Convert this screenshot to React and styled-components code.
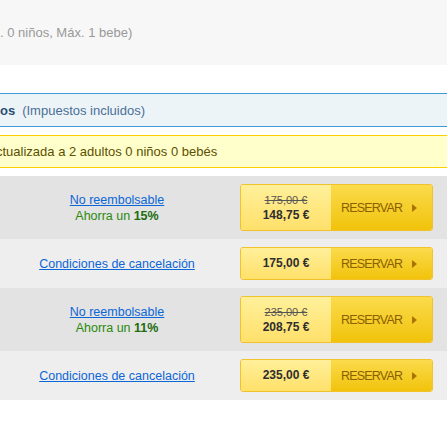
import styled, { createGlobalStyle } from "styled-components";

const Global = createGlobalStyle`
  html, body {
    margin: 0;
    padding: 0;
    background: #ffffff;
    overflow: hidden;
  }
  body {
    font-family: "Liberation Sans", Arial, sans-serif;
    font-size: 13px;
  }
`;

const RATES = [
  { id: 1, kind: "promo", oldPrice: "175,00 €", price: "148,75 €", saving: "15%" },
  { id: 2, kind: "std", price: "175,00 €" },
  { id: 3, kind: "promo", oldPrice: "235,00 €", price: "208,75 €", saving: "11%" },
  { id: 4, kind: "std", price: "235,00 €" },
];

const Page = styled.div`
  width: 447px;
`;

const Occupancy = styled.div`
  height: 65px;
  background: #f7f7f7;
  display: flex;
  align-items: center;
  color: #999999;
  white-space: nowrap;
`;

const TaxHeader = styled.div`
  margin-top: 28px;
  height: 32px;
  background: #edf4f8;
  border-top: 1px solid #3d9bd6;
  border-bottom: 1px solid #3d9bd6;
  display: flex;
  align-items: center;
  white-space: nowrap;
`;

const TaxTitle = styled.b`
  color: #2b4f73;
`;

const TaxNote = styled.span`
  margin-left: 7px;
  color: #4a6f97;
`;

const Notice = styled.div`
  margin-top: 8px;
  height: 31px;
  background: #ffffcc;
  border-top: 1px solid #fcd000;
  border-bottom: 1px solid #fcd000;
  display: flex;
  align-items: center;
  color: #5c5000;
  white-space: nowrap;
  text-indent: -4px;
`;

const Table = styled.div`
  margin-top: 8px;
  font-size: 12.5px;
`;

const Row = styled.div`
  display: grid;
  grid-template-columns: 234px 193px;
  column-gap: 6px;
  align-items: center;
  padding: 8px 0;
  background: ${(p) => (p.$promo ? "#e3e3e3" : "#efeeee")};
`;

const Info = styled.div`
  text-align: center;
  line-height: 16px;
`;

const Link = styled.a`
  color: #0b66d6;
  text-decoration: underline;
  cursor: pointer;
`;

const Saving = styled.div`
  color: #2a8a0c;
  b {
    color: #216c0c;
  }
`;

const Button = styled.div`
  display: flex;
  height: ${(p) => (p.$promo ? "45px" : "31px")};
  border: 1px solid #f2c22a;
  border-radius: 3px;
  overflow: hidden;
  cursor: pointer;
`;

const PricePart = styled.div`
  width: 90px;
  display: flex;
  flex-direction: column;
  align-items: center;
  justify-content: center;
  background: linear-gradient(#fff09a, #ffe06a);
  line-height: 15px;
`;

const OldPrice = styled.span`
  color: #555555;
  font-size: 11px;
  text-decoration: line-through;
`;

const Price = styled.span`
  color: #2e2e2e;
  font-size: 12px;
  font-weight: bold;
`;

const ReservePart = styled.div`
  flex: 1;
  display: flex;
  align-items: center;
  gap: 10px;
  padding-left: 10px;
  background: linear-gradient(#fbdb4c, #f1c30c);
  color: #8a6000;
  font-size: 12.5px;
  letter-spacing: -0.8px;
`;

const Arrow = styled.span`
  width: 0;
  height: 0;
  border-top: 4px solid transparent;
  border-bottom: 4px solid transparent;
  border-left: 5px solid #a87300;
`;

export default function App() {
  return (
    <Page>
      <Global />
      <Occupancy>. 0 niños, Máx. 1 bebe)</Occupancy>
      <TaxHeader>
        <TaxTitle>os</TaxTitle>
        <TaxNote>(Impuestos incluidos)</TaxNote>
      </TaxHeader>
      <Notice>ctualizada a 2 adultos 0 niños 0 bebés</Notice>
      <Table>
        {RATES.map((r) => {
          const promo = r.kind === "promo";
          return (
            <Row key={r.id} $promo={promo}>
              <Info>
                {promo ? (
                  <>
                    <Link>No reembolsable</Link>
                    <Saving>
                      Ahorra un <b>{r.saving}</b>
                    </Saving>
                  </>
                ) : (
                  <Link>Condiciones de cancelación</Link>
                )}
              </Info>
              <Button $promo={promo}>
                <PricePart>
                  {promo && <OldPrice>{r.oldPrice}</OldPrice>}
                  <Price>{r.price}</Price>
                </PricePart>
                <ReservePart>
                  RESERVAR
                  <Arrow />
                </ReservePart>
              </Button>
            </Row>
          );
        })}
      </Table>
    </Page>
  );
}
